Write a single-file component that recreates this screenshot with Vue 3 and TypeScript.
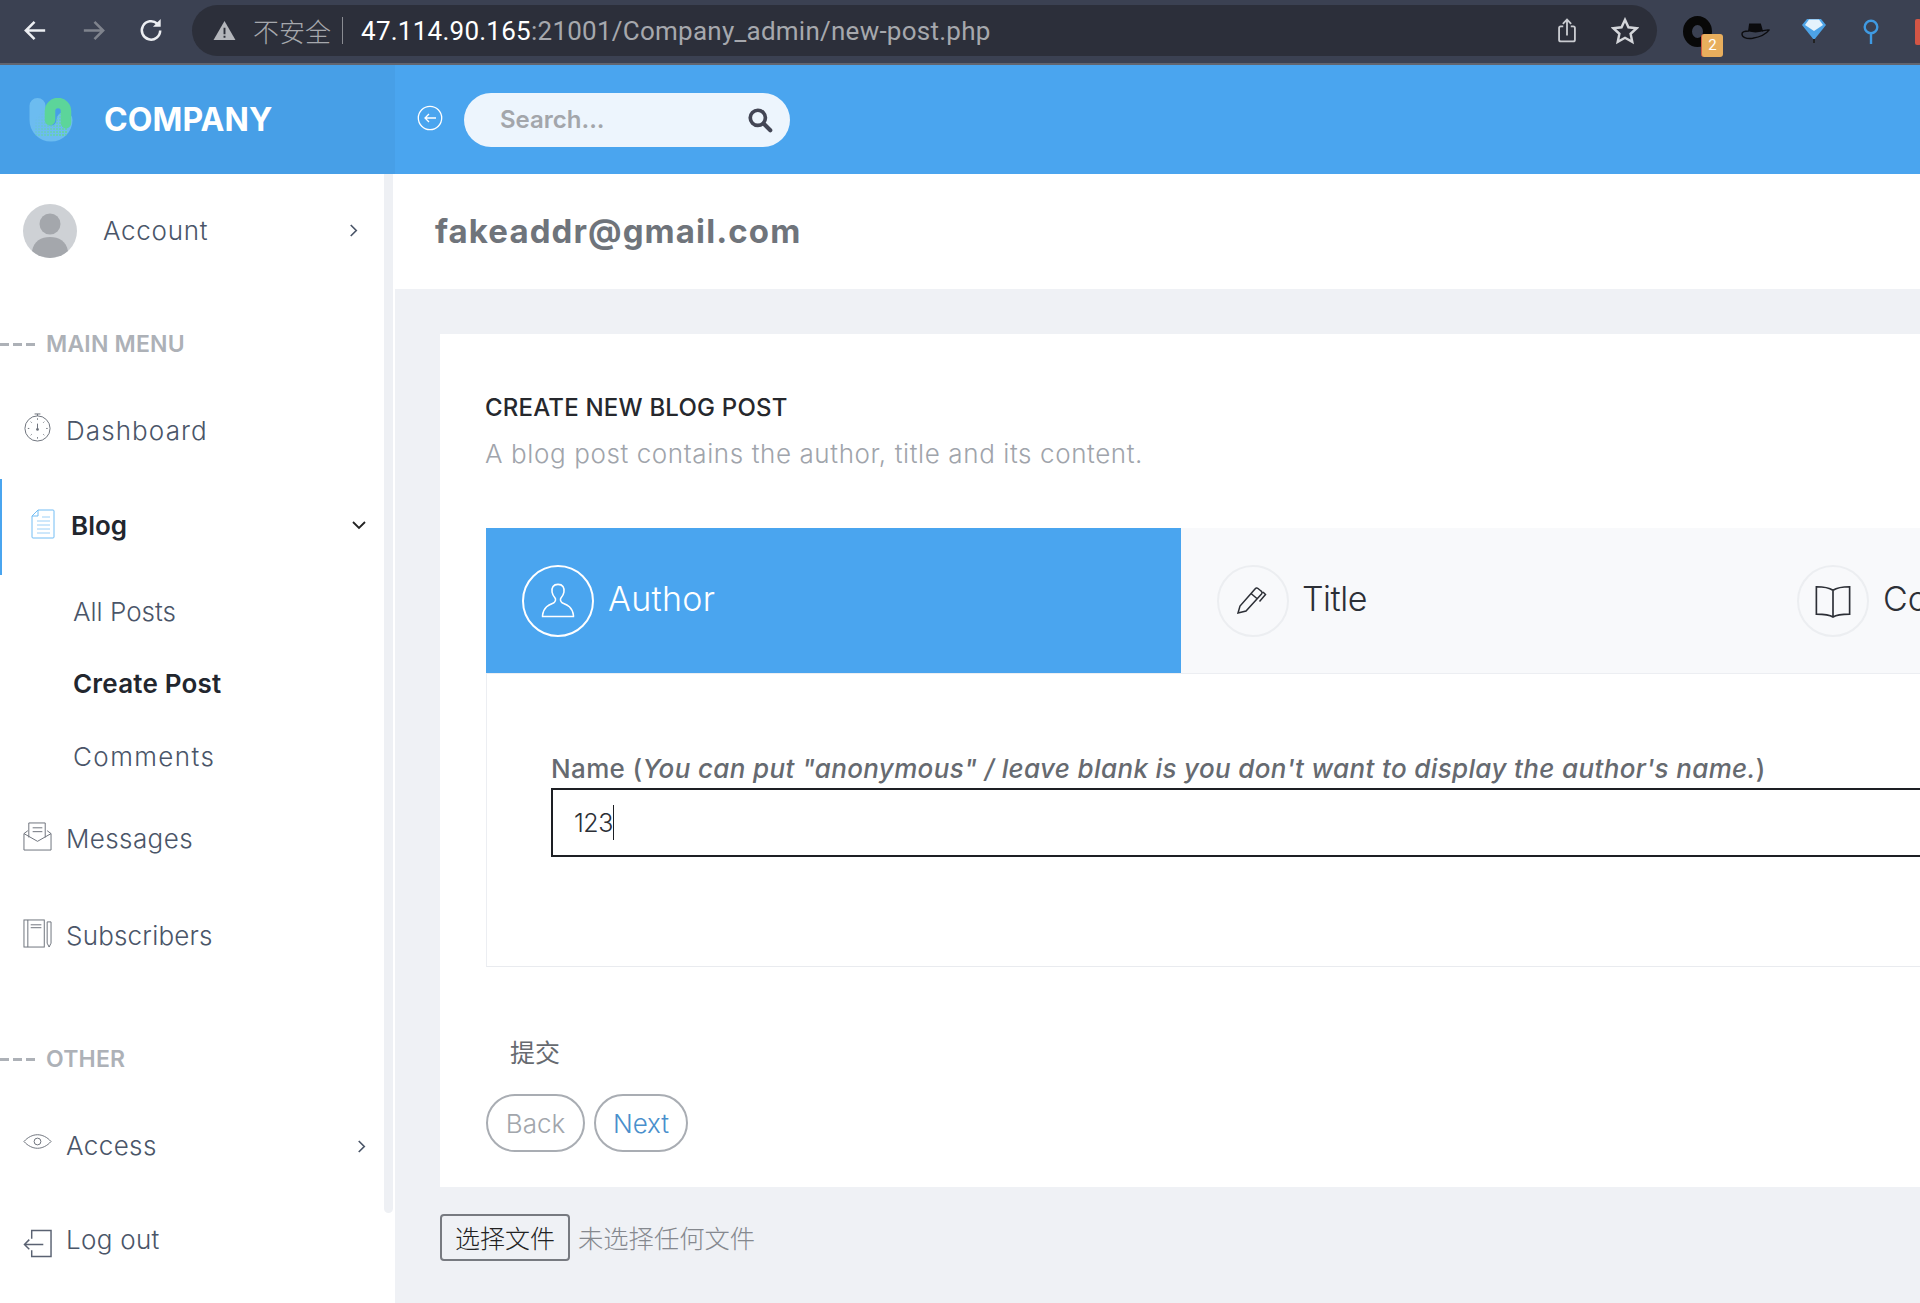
<script setup lang="ts">
const empty = ''
</script>

<template>
  <div class="page">
    <div class="chrome">
      <div class="nav-btns">
        <svg class="ci" viewBox="0 0 30 30"><path d="M25 15H6M14 6l-9 9 9 9" fill="none" stroke="#eceef2" stroke-width="2.6"/></svg>
        <svg class="ci" viewBox="0 0 30 30"><path d="M5 15h19M16 6l9 9-9 9" fill="none" stroke="#7f838d" stroke-width="2.6"/></svg>
        <svg class="ci" viewBox="0 0 30 30"><path d="M24 15a9.500 9.500 0 1 1-3-7" fill="none" stroke="#eceef2" stroke-width="2.6"/><path d="M24.500 3v8h-8z" fill="#eceef2"/></svg>
      </div>
      <div class="omnibox">
        <svg class="warn" viewBox="0 0 24 22"><path d="M12 1 23.500 21H.5z" fill="#b4b6bb"/><path d="M11 8h2v7h-2zM11 16.500h2v2h-2z" fill="#2d3039"/></svg>
        <span class="insecure">不安全</span>
        <span class="omni-sep"></span>
        <span class="url"><b>47.114.90.165</b>:21001/Company_admin/new-post.php</span>
        <svg class="share" viewBox="0 0 24 32"><path d="M7.500 11H4.500a2 2 0 0 0-2 2v14a2 2 0 0 0 2 2h15a2 2 0 0 0 2-2V13a2 2 0 0 0-2-2h-3M12 22V3M7 8l5-5 5 5" fill="none" stroke="#c9cbd0" stroke-width="2.200"/></svg>
        <svg class="star" viewBox="0 0 30 30"><path d="m15 3 3.700 8 8.800 1-6.500 6 1.800 8.700L15 22.300l-7.800 4.400L9 18l-6.500-6 8.800-1z" fill="none" stroke="#d4d6da" stroke-width="2.600"/></svg>
      </div>
      <div class="exts">
        <div class="ext-donut">
          <span class="donut"></span>
          <span class="badge">2</span>
        </div>
        <svg class="hat" viewBox="0 0 30 18"><path d="M8 9 9 2h11l2 7c3-.5 5-1.500 7-1-3 4-9 7-17 8.500C5 17.500 1 15 1 12c0-2 3-3 7-3z" fill="none" stroke="#0b0b0e" stroke-width="1.400"/><path d="M8 9 9 2h11l2 7c-4 2-10 2-14 0z" fill="#0b0b0e"/></svg>
        <svg class="gem" viewBox="0 0 24 26"><path d="M5 1h14l5 6-12 15L0 7z" fill="#4da3e6"/><path d="M7 1.500h10l4 5.500-9 6-9-6z" fill="#e4f2fc"/><path d="M12 21v4" stroke="#222" stroke-width="2"/></svg>
        <svg class="pin" viewBox="0 0 18 26"><circle cx="9" cy="8" r="6.300" fill="none" stroke="#3f9ae2" stroke-width="2.400"/><path d="M9 14v11" stroke="#3f9ae2" stroke-width="2.400"/></svg>
        <span class="ext-red"></span>
      </div>
    </div>

    <header class="topbar">
      <div class="brand">
        <svg class="logo" viewBox="0 0 44 44">
          <defs>
            <pattern id="dots" width="3" height="3" patternUnits="userSpaceOnUse"><rect width="2" height="2" fill="#66d2a6"/></pattern>
            <linearGradient id="fade" x1="0" y1="0" x2="1" y2="1"><stop offset=".3" stop-color="#fff" stop-opacity="0"/><stop offset=".8" stop-color="#fff"/></linearGradient>
            <mask id="fadeMask"><rect width="44" height="44" fill="url(#fade)"/></mask>
          </defs>
          <path d="M8.500 8v14a13.500 13.500 0 0 0 27 0" fill="none" stroke="#6cbcf0" stroke-width="16" stroke-linecap="round"/>
          <path d="M8.500 8v14a13.500 13.500 0 0 0 27 0" fill="none" stroke="url(#dots)" stroke-width="16" stroke-linecap="round" mask="url(#fadeMask)"/>
          <path d="M21 22V13a8 8 0 0 1 16 0v12" fill="none" stroke="#5cd59a" stroke-width="10.500" stroke-linecap="round"/>
        </svg>
        <span class="brand-name">COMPANY</span>
      </div>
      <div class="topbar-main">
        <svg class="collapse" viewBox="0 0 26 26"><circle cx="13" cy="13" r="11.700" fill="none" stroke="#fff" stroke-width="1.300"/><path d="M19 13H8M12 9l-4 4 4 4" fill="none" stroke="#fff" stroke-width="1.300"/></svg>
        <div class="search">
          <span class="search-text">Search...</span>
          <svg class="search-ic" viewBox="0 0 24 24"><circle cx="10" cy="10" r="7" fill="none" stroke="#434655" stroke-width="3.400"/><path d="m15.500 15.500 6 6" stroke="#434655" stroke-width="3.800" stroke-linecap="round"/></svg>
        </div>
      </div>
    </header>

    <div class="body">
      <aside class="sidebar">
        <div class="scrollbar"></div>
        <div class="account">
          <svg class="avatar" viewBox="0 0 54 54"><circle cx="27" cy="27" r="27" fill="#ced1d5"/><circle cx="27" cy="20" r="10.500" fill="#a4a7ac"/><path d="M9 47c2-10 9-14 18-14s16 4 18 14a27 27 0 0 1-36 0z" fill="#a4a7ac"/></svg>
          <span class="account-name">Account</span>
          <svg class="chev account-chev" viewBox="0 0 12 16"><path d="m3 2 6 6-6 6" fill="none" stroke="#4a5568" stroke-width="1.800"/></svg>
        </div>

        <div class="section main-section"><span class="dash"></span>MAIN MENU</div>

        <div class="item dashboard">
          <svg class="ic" viewBox="0 0 30 30"><circle cx="15" cy="16" r="13" fill="none" stroke="#6c717a" stroke-width="1"/><path d="M12 1h6M15 1v2" stroke="#6c717a" stroke-width="1"/><path d="M15 11v6M15 5.500v1.500M15 25v1.500M5 16h1.500M24 16h1.500M8 9l1 1M21 22l1 1M22 9l-1 1M9 22l-1 1" stroke="#6c717a" stroke-width="1"/><circle cx="15" cy="17" r="1.400" fill="#6c717a"/></svg>
          <span>Dashboard</span>
        </div>

        <div class="item blog">
          <svg class="ic blog-ic" viewBox="0 0 24 30"><path d="M7 1h15a1 1 0 0 1 1 1v26a1 1 0 0 1-1 1H2a1 1 0 0 1-1-1V7z M7 1v6H1" fill="none" stroke="#72bdf4" stroke-width="1"/><path d="M6 12h13M6 16h13M6 20h13M6 24h13M11 8h8" stroke="#9cd0f7" stroke-width="1"/></svg>
          <span>Blog</span>
          <svg class="chev blog-chev" viewBox="0 0 16 12"><path d="m2 3 6 6 6-6" fill="none" stroke="#222" stroke-width="1.800"/></svg>
        </div>

        <div class="sub sub-all">All Posts</div>
        <div class="sub sub-active">Create Post</div>
        <div class="sub sub-comments">Comments</div>

        <div class="item messages">
          <svg class="ic" viewBox="0 0 30 30"><path d="M1 12v17h28V12l-4-3M1 12l4-3M1 12l14 8 14-8" fill="none" stroke="#6c717a" stroke-width="1"/><path d="M6 16V1h17v15" fill="none" stroke="#6c717a" stroke-width="1"/><path d="M10 6h10M10 10h10" stroke="#6c717a" stroke-width="1"/></svg>
          <span>Messages</span>
        </div>

        <div class="item subscribers">
          <svg class="ic" viewBox="0 0 30 30"><rect x="1" y="1" width="21" height="28" fill="none" stroke="#6c717a" stroke-width="1"/><path d="M5 1v28M8 6h11M8 9h11M25 3h4v22l-2 4-2-4z" fill="none" stroke="#6c717a" stroke-width="1"/></svg>
          <span>Subscribers</span>
        </div>

        <div class="section other-section"><span class="dash"></span>OTHER</div>

        <div class="item access">
          <svg class="ic" viewBox="0 0 30 16"><path d="M1 8c4-4.500 9-7 14-7s10 2.500 14 7c-4 4.500-9 7-14 7S5 12.500 1 8z" fill="none" stroke="#6c717a" stroke-width="1"/><circle cx="15" cy="8" r="3.500" fill="none" stroke="#6c717a" stroke-width="1"/></svg>
          <span>Access</span>
          <svg class="chev access-chev" viewBox="0 0 12 16"><path d="m3 2 6 6-6 6" fill="none" stroke="#4a5568" stroke-width="1.800"/></svg>
        </div>

        <div class="item logout">
          <svg class="ic" viewBox="0 0 30 30"><path d="M9 10V1.500h20v27H9V22M21 16H1.500M6.500 11l-5 5 5 5" fill="none" stroke="#5a6272" stroke-width="1.500"/></svg>
          <span>Log out</span>
        </div>
      </aside>

      <main class="content">
        <div class="page-title">fakeaddr@gmail.com</div>
        <div class="work">
          <section class="card">
            <h2 class="card-title">CREATE NEW BLOG POST</h2>
            <p class="card-sub">A blog post contains the author, title and its content.</p>

            <div class="wizard">
              <div class="tabs">
                <div class="tab tab-active">
                  <span class="tab-circle">
                    <svg viewBox="0 0 32 32" class="tab-ic tab-ic-lg"><path d="M16 2c4 0 5.500 2.500 5 6.500-.3 2-1.300 3.500-2.500 5-.8 1-.5 3 1 4 3.500 1.500 8.500 3 9.500 10.500v1H3v-1c1-7.500 6-9 9.500-10.500 1.500-1 1.800-3 1-4-1.200-1.500-2.200-3-2.500-5C10.500 4.500 12 2 16 2z" fill="none" stroke="#fff" stroke-width="1.300"/></svg>
                  </span>
                  <span class="tab-text">Author</span>
                </div>
                <div class="tab tab-title">
                  <span class="tab-circle">
                    <svg viewBox="0 0 32 32" class="tab-ic"><path d="M1 28 3 21 18 4a2 2 0 0 1 3-.5l3 2.500a2 2 0 0 1 .5 3L9 26zM14 8.500l6.500 5.500M26 7l2.500 2.500-6 7" fill="none" stroke="#2c2f36" stroke-width="1.500"/></svg>
                  </span>
                  <span class="tab-text">Title</span>
                </div>
                <div class="tab tab-content">
                  <span class="tab-circle">
                    <svg viewBox="0 0 32 32" class="tab-ic tab-ic-lg"><path d="M16 7c-3-2-8-3-14-3v23c6 0 11 .5 14 2.500 3-2 8-2.500 14-2.500V4c-6 0-11 1-14 3zM16 7v22" fill="none" stroke="#2c2f36" stroke-width="1.400"/></svg>
                  </span>
                  <span class="tab-text">Content</span>
                </div>
              </div>
              <div class="panel">
                <label class="field-label">Name (<em>You can put "anonymous" / leave blank is you don't want to display the author's name.</em>)</label>
                <div class="input">123<span class="caret"></span></div>
              </div>
            </div>

            <div class="submit">提交</div>
            <div class="actions">
              <button class="pill pill-back" type="button">Back</button>
              <button class="pill pill-next" type="button">Next</button>
            </div>
          </section>

          <div class="file">
            <button class="file-btn" type="button">选择文件</button>
            <span class="file-none">未选择任何文件{{ empty }}</span>
          </div>
        </div>
      </main>
    </div>
  </div>
</template>

<style>
html, body { margin: 0; padding: 0; overflow: hidden; background: #eff1f5; }
</style>

<style scoped>
.page {
  width: 1920px;
  height: 1303px;
  overflow: hidden;
  display: flex;
  flex-direction: column;
  font-family: Inter, "Noto Sans CJK SC", sans-serif;
  background: #eff1f5;
}

/* browser chrome */
.chrome {
  height: 65px;
  box-sizing: border-box;
  flex: none;
  display: flex;
  align-items: flex-start;
  background: #3b4152;
  border-bottom: 2px solid #62656f;
  padding-top: 5px;
}
.nav-btns { width: 192px; height: 51px; flex: none; display: flex; align-items: center; padding-left: 21px; box-sizing: border-box; gap: 29px; }
.ci { width: 29px; height: 29px; flex: none; }
.omnibox {
  width: 1465px;
  height: 51px;
  flex: none;
  display: flex;
  align-items: center;
  background: #2c2f3a;
  border-radius: 26px;
  box-sizing: border-box;
  padding-left: 21px;
  font-family: Roboto, "Noto Sans CJK SC", sans-serif;
  font-size: 26px;
  color: #a6a8ad;
}
.warn { width: 23px; height: 21px; flex: none; }
.insecure { margin-left: 17px; font-weight: 300; }
.omni-sep { width: 1px; height: 27px; background: #8a8c92; margin: 0 18px 0 11px; }
.url { flex: none; width: 1197px; white-space: nowrap; letter-spacing: .25px; }
.url b { color: #fff; font-weight: 400; }
.share { width: 20px; height: 27px; flex: none; margin-left: -1px; }
.star { width: 28px; height: 28px; flex: none; margin-left: 34px; }
.exts { position: relative; flex: 1; height: 58px; }
.ext-donut { position: absolute; left: 26px; top: 11px; width: 40px; height: 41px; }
.donut { position: absolute; left: 0; top: 0; width: 29px; height: 31px; box-sizing: border-box; border: 9px solid #080808; border-radius: 50%; }
.badge { position: absolute; left: 18px; top: 18px; width: 22px; height: 23px; border-radius: 3px; background: #e8ae5d; border-left: 1px solid #cf5a45; box-sizing: border-box; color: #fff; font-size: 15px; line-height: 23px; text-align: center; font-family: Roboto, sans-serif; }
.hat { position: absolute; left: 84px; top: 17px; width: 29px; height: 18px; }
.gem { position: absolute; left: 145px; top: 13px; width: 24px; height: 26px; }
.pin { position: absolute; left: 205px; top: 14px; width: 18px; height: 26px; }
.ext-red { position: absolute; left: 258px; top: 14px; width: 6px; height: 26px; background: #d35545; border-radius: 2px; }

/* top bar */
.topbar { height: 109px; flex: none; display: flex; background: #4aa5ef; }
.brand { width: 395px; flex: none; background: #479fe7; display: flex; align-items: center; padding-left: 29px; box-sizing: border-box; }
.logo { width: 44px; height: 44px; flex: none; }
.brand-name { margin-left: 31px; color: #fff; font-size: 32px; font-weight: 700; letter-spacing: .1px; }
.topbar-main { flex: 1; display: flex; align-items: center; padding-left: 22px; }
.collapse { width: 26px; height: 26px; flex: none; margin-top: -3px; }
.search { width: 326px; height: 54px; margin-left: 21px; box-sizing: border-box; padding: 0 17px 0 36px; border-radius: 27px; background: #edf5fd; display: flex; align-items: center; justify-content: space-between; }
.search-text { font-size: 24px; font-weight: 600; color: #a3a6ab; margin-top: -1px; }
.search-ic { width: 26px; height: 26px; }

/* body */
.body { flex: 1; display: flex; min-height: 0; }
.sidebar { width: 395px; flex: none; background: #fff; position: relative; color: #4a5568; box-sizing: border-box; }
.scrollbar { position: absolute; left: 384px; top: 0; width: 9px; height: 1039px; background: #eef0f4; border-radius: 0 0 5px 5px; }
.account { height: 114px; display: flex; align-items: center; padding-left: 23px; box-sizing: border-box; }
.avatar { width: 54px; height: 54px; flex: none; }
.account-name { margin-left: 26px; margin-top: -2px; font-size: 26px; font-weight: 300; letter-spacing: .7px; }
.chev { flex: none; }
.account-chev { width: 11px; height: 15px; position: absolute; left: 348px; top: 49px; }
.section { display: flex; align-items: center; color: #adb1b7; font-size: 23px; font-weight: 600; height: 40px; letter-spacing: .2px; }
.dash { width: 36px; height: 3px; margin-right: 10px; background: repeating-linear-gradient(90deg, #adb1b7 0 9px, transparent 9px 13px); }
.main-section { margin-top: 36px; }
.other-section { margin-top: 64px; }
.item { display: flex; align-items: center; position: relative; font-size: 26px; font-weight: 300; padding-left: 23px; box-sizing: border-box; }
.item > span { margin-top: -2px; }
.ic { width: 29px; height: 29px; flex: none; margin-right: 14px; margin-top: -6px; }
.dashboard { height: 78px; margin-top: 28px; letter-spacing: 1.1px; }
.dashboard .ic { margin-top: -8px; }
.blog { height: 96px; margin-top: 9px; border-left: 2px solid #4aa5ef; padding-left: 29px; color: #22262e; font-weight: 600; letter-spacing: 0; }
.blog > span { margin-top: -4px; }
.blog .blog-ic { width: 24px; height: 30px; margin-right: 16px; margin-top: -6px; }
.blog-chev { width: 16px; height: 12px; position: absolute; left: 349px; top: 40px; }
.sub { height: 73px; line-height: 73px; padding-left: 73px; font-size: 26px; font-weight: 300; }
.sub-active { color: #22262e; font-weight: 600; letter-spacing: .2px; line-height: 72px; }
.sub-comments { letter-spacing: 1.4px; line-height: 71px; }
.messages { height: 78px; margin-top: 6px; letter-spacing: .4px; }
.subscribers { height: 78px; margin-top: 19px; letter-spacing: .2px; }
.access { height: 78px; margin-top: 28px; letter-spacing: .4px; }
.access .ic { height: 17px; margin-top: -10px; }
.access-chev { width: 11px; height: 15px; position: absolute; left: 356px; top: 32px; }
.logout { height: 78px; margin-top: 16px; letter-spacing: .3px; }
.logout .ic { margin-top: 6px; }

/* content */
.content { flex: 1; min-width: 0; display: flex; flex-direction: column; }
.page-title { height: 115px; box-sizing: border-box; flex: none; background: #fff; display: flex; align-items: center; padding: 0 0 2px 40px; font-size: 33px; font-weight: 700; letter-spacing: 1.1px; color: #6f747b; }
.work { flex: 1; padding: 45px 0 0 45px; }
.card { background: #fff; height: 853px; box-sizing: border-box; padding: 56px 0 0 46px; }
.card-title { margin: 0; margin-left: -1px; font-size: 24px; line-height: 36px; font-weight: 500; letter-spacing: .2px; color: #26282d; }
.card-sub { margin: 10px 0 0 -1px; font-size: 26px; line-height: 36px; font-weight: 300; letter-spacing: .6px; color: #a0a4ab; }
.wizard { margin-top: 56px; }
.tabs { height: 145px; display: flex; background: #f8f9fb; border-bottom: 1px solid #eceef2; }
.tab { display: flex; align-items: center; padding-left: 36px; flex: none; color: #2c2f36; font-size: 34px; font-weight: 300; box-sizing: border-box; }
.tab-text { margin-top: -5px; }
.tab-active { width: 695px; background: #4aa5ef; color: #fff; letter-spacing: .3px; }
.tab-title { width: 580px; padding-left: 36px; letter-spacing: -.5px; }
.tab-title .tab-text { margin-left: -1px; }
.tab-content { width: 500px; }
.tab-circle { width: 72px; height: 72px; border-radius: 50%; border: 2px solid #eceef1; box-sizing: border-box; display: flex; align-items: center; justify-content: center; margin-right: 14px; flex: none; }
.tab-active .tab-circle { border: 2px solid #fff; }
.tab-ic { width: 32px; height: 32px; }
.tab-ic-lg { width: 38px; height: 38px; }
.panel { height: 293px; box-sizing: border-box; border-left: 1px solid #eceef2; border-bottom: 1px solid #e9ebef; padding: 76px 0 0 64px; overflow: hidden; }
.field-label { display: block; font-size: 26px; line-height: 38px; font-weight: 500; letter-spacing: .35px; color: #666a70; white-space: nowrap; }
.field-label em { font-style: italic; }
.input { width: 1500px; height: 69px; box-sizing: border-box; border: 2px solid #1d1f24; display: flex; align-items: center; padding-left: 21px; font-size: 25px; font-weight: 300; color: #2c2f36; letter-spacing: -.5px; }
.caret { width: 1px; height: 35px; background: #1d1f24; margin-left: 0; }
.submit { margin: 68px 0 0 24px; font-size: 25px; line-height: 36px; color: #666a70; }
.actions { display: flex; gap: 9px; margin-top: 23px; }
.pill { height: 58px; box-sizing: border-box; border-radius: 29px; border: 2px solid #a9adb3; background: #fff; font-family: inherit; font-size: 26px; font-weight: 300; padding: 0; }
.pill-back { width: 99px; color: #a2a6ac; }
.pill-next { width: 94px; color: #4a8fcc; }
.file { display: flex; align-items: center; margin-top: 27px; gap: 8px; }
.file-btn { width: 130px; height: 47px; border: 2px solid #777a80; border-radius: 4px; background: #eff1f5; font-family: inherit; font-size: 25px; font-weight: 300; color: #222; padding: 0 0 2px; }
.file-none { font-size: 25.300px; font-weight: 300; color: #85888e; margin-top: -2px; }
</style>
